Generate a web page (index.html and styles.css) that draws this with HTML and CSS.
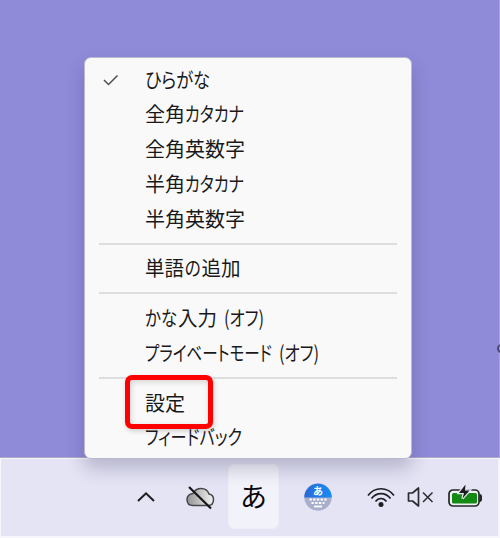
FILE: index.html
```html
<!DOCTYPE html>
<html lang="ja">
<head>
<meta charset="utf-8">
<title>IME</title>
<link rel="stylesheet" href="styles.css">
</head>
<body>
<div class="screen">
  <div class="desktop"><span class="cursor"></span></div>
  <div class="taskbar">
    <svg class="icon chevron" width="20" height="12" viewBox="0 0 20 12"><path d="M2 10 10 2.300l8 7.700" fill="none" stroke="#1c1c22" stroke-width="2"/></svg>
    <svg class="icon cloud" width="32" height="28" viewBox="0 0 32 28">
      <defs><linearGradient id="cl"><stop offset="0" stop-color="#929292"/><stop offset=".5" stop-color="#c4c4c4"/><stop offset="1" stop-color="#f2f2ee"/></linearGradient></defs>
      <path d="M9 22.500C5 22.500 3 20 3 16.500S5.500 11 9 10.500C10.500 7.500 13 5.500 17 5.500s7 2.500 8 5.500c3 .5 4.500 3 4.500 5.500 0 3.500-2 6-5.500 6Z" fill="url(#cl)" stroke="#46464a" stroke-width="1.500"/>
      <path d="m5 4 22 21.500" stroke="#15151a" stroke-width="2.200"/>
    </svg>
    <div class="ime">あ</div>
    <svg class="icon keyboard" width="28" height="28" viewBox="0 0 28 28">
      <defs><linearGradient id="kb" x2="1" y2="0"><stop stop-color="#2b68d8"/><stop offset="1" stop-color="#158df5"/></linearGradient></defs>
      <circle cx="14" cy="14" r="13.700" fill="#a9aecb"/>
      <path d="M.3 14.500a13.700 13.700 0 0 1 27.400 0Z" fill="url(#kb)"/>
      <text x="14" y="12" text-anchor="middle" class="badge-text">あ</text>
      <path d="M5.500 16.500h17M7.500 20h13" stroke="#fff" stroke-width="2" stroke-dasharray="2.300 1.400"/>
      <path d="M10 23.500h8" stroke="#fff" stroke-width="1.800"/>
    </svg>
    <svg class="icon wifi" width="28" height="22" viewBox="0 0 28 22">
      <g fill="none" stroke="#1e1e25" stroke-width="1.700"><path d="M1 9.500C8 .5 20 .5 27 9.500"/><path d="M4.500 12.500c5-6.600 14-6.600 19 0"/><path d="M8.500 15.500c3-4 8-4 11 0"/></g>
      <circle cx="14" cy="18.500" r="2.500" fill="#1e1e25"/>
    </svg>
    <svg class="icon sound" width="28" height="22" viewBox="0 0 28 22"><path d="M1.500 7H5.500L11.500 2v18l-6-5h-4Z" fill="none" stroke="#2b2b31" stroke-width="1.700" stroke-linejoin="round"/><path d="m16 6.500 9.500 9.500M25.500 6.500 16 16" stroke="#2b2b31" stroke-width="1.500"/></svg>
    <svg class="icon battery" width="36" height="26" viewBox="0 0 36 26">
      <rect x="2" y="6" width="30" height="16" rx="4" fill="#f1f2f3" stroke="#26262b" stroke-width="1.700"/>
      <path d="M32.500 10q3 0 2.500 4 .5 4-2.500 4Z" fill="#26262b"/>
      <rect x="5" y="9" width="25" height="10.500" rx="1.500" fill="#138a13"/>
      <path d="m18.500 .5-6.500 8.500h5l-1.500 5.500 7-8h-4.500Z" fill="#1b1b1f" stroke="#e8e8f3" stroke-width="2.500" paint-order="stroke"/>
    </svg>
  </div>
  <div class="menu">
    <div class="row"><svg class="check" width="16" height="12" viewBox="0 0 16 12"><path d="m1 6 4.500 4.500L14.500 1.500" fill="none" stroke="#505050" stroke-width="1.500"/></svg>
      <svg class="label"><text class="kana" x="0" y="25" textLength="65" lengthAdjust="spacingAndGlyphs">ひらがな</text></svg></div>
    <div class="row"><svg class="label"><text x="0" y="25">全角</text><text class="kana" x="40" y="25" textLength="59" lengthAdjust="spacingAndGlyphs">カタカナ</text></svg></div>
    <div class="row"><svg class="label"><text x="0" y="25">全角英数字</text></svg></div>
    <div class="row"><svg class="label"><text x="0" y="25">半角</text><text class="kana" x="40" y="25" textLength="59" lengthAdjust="spacingAndGlyphs">カタカナ</text></svg></div>
    <div class="row"><svg class="label"><text x="0" y="25">半角英数字</text></svg></div>
    <div class="sep"></div>
    <div class="row"><svg class="label"><text x="0" y="25" textLength="39" lengthAdjust="spacingAndGlyphs">単語</text><text x="39.500" y="25" textLength="16.500" lengthAdjust="spacingAndGlyphs">の</text><text x="56.500" y="25" textLength="39" lengthAdjust="spacingAndGlyphs">追加</text></svg></div>
    <div class="sep"></div>
    <div class="row"><svg class="label"><text class="kana" x="0" y="25" textLength="32" lengthAdjust="spacingAndGlyphs">かな</text><text x="33" y="25" textLength="39" lengthAdjust="spacingAndGlyphs">入力</text><text class="kana" x="79" y="25" textLength="40" lengthAdjust="spacingAndGlyphs">(オフ)</text></svg></div>
    <div class="row"><svg class="label"><text class="kana" x="0" y="25" textLength="127" lengthAdjust="spacingAndGlyphs">プライベートモード</text><text class="kana" x="134" y="25" textLength="40" lengthAdjust="spacingAndGlyphs">(オフ)</text></svg></div>
    <div class="sep"></div>
    <div class="row"><svg class="label"><text x="0" y="25">設定</text></svg><span class="highlight"></span></div>
    <div class="row"><svg class="label"><text class="kana" x="0" y="25" textLength="97" lengthAdjust="spacingAndGlyphs">フィードバック</text></svg></div>
  </div>
</div>
</body>
</html>
```
FILE: styles.css
```css
body { margin: 0; }
.screen {
  position: relative;
  display: flex;
  flex-direction: column;
  width: 500px;
  height: 538px;
  overflow: hidden;
  font-family: "Noto Sans CJK JP", sans-serif;
}
.desktop {
  position: relative;
  height: 457px;
  background: #8f8bd8;
  border-right: 1px solid #a9a5e2;
  border-bottom: 1px solid #aaa9c4;
}
.cursor {
  position: absolute;
  right: -7px;
  top: 344px;
  width: 5px;
  height: 5px;
  border: 2px solid #4a4870;
  border-radius: 50%;
}
.taskbar {
  box-sizing: border-box;
  height: 80px;
  display: flex;
  align-items: center;
  padding: 0 15px 2px 135px;
  background: #e4e4f5;
  border: 1px solid #f6f6fc;
  border-width: 1px 2px 2px 1px;
}
.icon { flex: none; display: block; }
.chevron { margin-right: 28px; }
.cloud { margin-right: 12px; }
.ime {
  box-sizing: border-box;
  flex: none;
  width: 51px;
  height: 65px;
  margin-right: 25px;
  border: 1px solid #ededf8;
  border-radius: 6px;
  background: #f2f2fa;
  color: #08080c;
  font-size: 27px;
  line-height: 61px;
  text-align: center;
}
.keyboard { margin-right: 35px; }
.badge-text { font-size: 10px; font-weight: 700; fill: #fff; }
.wifi { margin-right: 12px; }
.sound { margin-right: 12px; }
.menu {
  position: absolute;
  left: 84px;
  top: 57px;
  box-sizing: border-box;
  width: 328px;
  height: 402px;
  padding: 4.600px 14px 0;
  border: 1px solid #bbb9cf;
  border-radius: 7px;
  background: #f9f9f9;
  box-shadow: 0 10px 18px rgba(40, 38, 80, .24);
}
.row {
  position: relative;
  display: flex;
  justify-content: flex-end;
  align-items: center;
  height: 34.800px;
}
.check { margin-right: auto; margin-left: 4px; }
.label {
  flex: none;
  width: 252px;
  height: 34.800px;
  font-size: 20px;
  fill: #191919;
  overflow: visible;
}
.kana { font-size: 20.500px; font-feature-settings: "palt"; }
.sep {
  height: 2px;
  margin: 6px 0 6.900px;
  background: #dedede;
}
.highlight {
  position: absolute;
  left: 26px;
  top: -11px;
  box-sizing: border-box;
  width: 88px;
  height: 54px;
  border: 5px solid #fe0000;
  border-radius: 7px;
  box-shadow: 1px 2px 5px rgba(0, 0, 0, .18), inset 1px 2px 6px rgba(0, 0, 0, .15);
}
```
